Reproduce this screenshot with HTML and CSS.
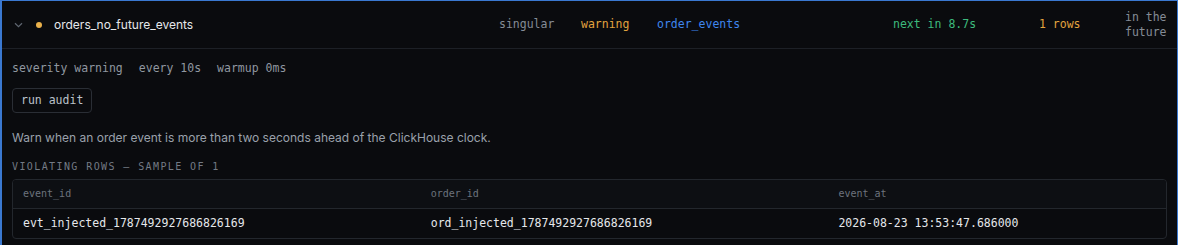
FILE: index.html
```html
<!DOCTYPE html>
<html>
<head>
<meta charset="utf-8">
<link rel="stylesheet" href="styles.css">
</head>
<body>
<div class="card">
  <div class="head">
    <span class="chev"><svg width="9" height="6" viewBox="0 0 9 6"><path d="M1 1.2 L4.5 4.6 L8 1.2" fill="none" stroke="#5f6670" stroke-width="1.2"/></svg></span>
    <span class="dot"></span>
    <span class="name">orders_no_future_events</span>
    <span class="mono muted">singular</span>
    <span class="mono amber">warning</span>
    <span class="mono blue">order_events</span>
    <span class="mono green">next in 8.7s</span>
    <span class="mono amber">1 rows</span>
    <span class="mono muted future">in the future</span>
  </div>
  <div class="body">
    <div class="meta">
      <span>severity warning</span>
      <span>every 10s</span>
      <span>warmup 0ms</span>
    </div>
    <div class="actions"><button class="btn">run audit</button></div>
    <p class="desc">Warn when an order event is more than two seconds ahead of the ClickHouse clock.</p>
    <div class="label">VIOLATING ROWS — SAMPLE OF 1</div>
    <div class="tablewrap">
      <table>
        <thead>
          <tr><th>event_id</th><th>order_id</th><th>event_at</th></tr>
        </thead>
        <tbody>
          <tr><td>evt_injected_1787492927686826169</td><td>ord_injected_1787492927686826169</td><td>2026-08-23 13:53:47.686000</td></tr>
        </tbody>
      </table>
    </div>
  </div>
</div>
</body>
</html>
```
FILE: styles.css
```css
* { box-sizing: border-box; }
html, body { margin: 0; padding: 0; background: #0a0b0e; }
body { font-family: Inter, "Noto Sans", sans-serif; color: #e5e7eb; }

.card {
  background: #0a0b0e;
  border: 1px solid #3a78d0;
  border-left-width: 2px;
  border-bottom: none;
  padding-bottom: 10px;
}

.head {
  display: grid;
  grid-template-columns: 24px 18px 1fr 82px 76px 236px 146px 86px 45px;
  align-items: center;
  height: 48px;
  padding: 0 7px 0 10px;
  border-bottom: 1px solid #1d2026;
}
.chev { display: flex; align-items: center; padding-left: 2px; }
.dot { width: 6px; height: 6px; border-radius: 50%; background: #eab14b; }
.name { font-size: 12px; color: #e6e8eb; }
.mono { font-family: "DejaVu Sans Mono", monospace; font-size: 11.5px; line-height: 15px; }
.muted { color: #858c96; }
.amber { color: #e2a33f; }
.blue { color: #3f86ee; }
.green { color: #3dba7d; }

.body { padding: 11px 10px 0 10px; }
.meta {
  display: flex;
  gap: 16px;
  font-family: "DejaVu Sans Mono", monospace;
  font-size: 11.5px;
  line-height: 16px;
  color: #9097a0;
}
.actions { margin-top: 12px; display: flex; }
.btn {
  display: block;
  font-family: "DejaVu Sans Mono", monospace;
  font-size: 11.5px;
  line-height: 23px;
  color: #bcc2ca;
  background: transparent;
  border: 1px solid #2a2e35;
  border-radius: 4px;
  height: 25px;
  padding: 0 8px;
  margin: 0;
}
.desc {
  margin: 16px 0 0 0;
  font-size: 12px;
  line-height: 18px;
  color: #9aa1ab;
}
.label {
  margin-top: 13px;
  font-family: "DejaVu Sans Mono", monospace;
  font-size: 10px;
  line-height: 14px;
  letter-spacing: 1.4px;
  color: #737a84;
}
.tablewrap {
  margin-top: 5px;
  border: 1px solid #23272d;
  border-radius: 4px;
  overflow: hidden;
}
table { width: 100%; border-collapse: collapse; }
th {
  text-align: left;
  font-family: "DejaVu Sans Mono", monospace;
  font-weight: normal;
  font-size: 10px;
  color: #6c737d;
  background: #0d0f13;
  height: 28px;
  padding: 0 10px;
  border-bottom: 1px solid #23272d;
}
td {
  font-family: "DejaVu Sans Mono", monospace;
  font-size: 11.5px;
  color: #e5e7eb;
  height: 30px;
  padding: 0 10px;
}
```
